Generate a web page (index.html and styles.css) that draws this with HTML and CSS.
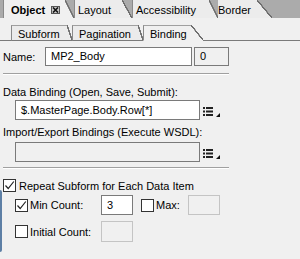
FILE: index.html
```html
<!DOCTYPE html>
<html>
<head>
  <link rel="stylesheet" href="styles.css">
</head>
<body>
  <!-- main palette tabs -->
  <div class="tabs-top">
    <div class="tab tab-on">
      <span class="tab-label tab-object">Object
        <span class="close-box">
          <svg width="7" height="6" viewBox="0 0 7 6"><path d="M1 0.5 L6 5.5 M6 0.5 L1 5.5" stroke="#111" stroke-width="1.6"/></svg>
        </span>
      </span>
      <span class="tab-slant"></span>
    </div>
    <div class="tab"><span class="tab-label tab-layout">Layout</span><span class="tab-slant tab-slant-10"></span></div>
    <div class="tab"><span class="tab-label tab-access">Accessibility</span><span class="tab-slant"></span></div>
    <div class="tab"><span class="tab-label tab-border">Border</span><span class="tab-slant tab-slant-wide"></span></div>
  </div>

  <!-- object sub tabs -->
  <div class="tabs-sub">
    <div class="subtab"><span class="subtab-label sub-subform">Subform</span><span class="subtab-slant"></span></div>
    <div class="subtab"><span class="subtab-label sub-pagination">Pagination</span><span class="subtab-slant"></span></div>
    <div class="subtab subtab-on"><span class="subtab-label sub-binding">Binding</span><span class="subtab-slant"></span></div>
    <div class="subtab-fill"></div>
  </div>

  <div class="panel">
    <div class="row-name">
      <span class="name-label">Name:</span>
      <div class="field field-name">MP2_Body</div>
      <div class="field field-off field-index">0</div>
    </div>

    <div class="sep"></div>

    <div class="caption">Data Binding (Open, Save, Submit):</div>
    <div class="row-bind">
      <div class="field field-bind">$.MasterPage.Body.Row[*]</div>
      <svg class="list-icon" width="18" height="12" viewBox="0 0 18 12">
        <rect x="0" y="1" width="2" height="2" fill="#222"/>
        <rect x="3" y="1" width="7" height="2" fill="#222"/>
        <rect x="0" y="4.5" width="2" height="2" fill="#222"/>
        <rect x="3" y="4.5" width="7" height="2" fill="#222"/>
        <rect x="0" y="8" width="2" height="2" fill="#222"/>
        <rect x="3" y="8" width="7" height="2" fill="#222"/>
        <path d="M13 11 L17 11 L17 7 Z" fill="#111"/>
      </svg>
    </div>

    <div class="caption caption-import">Import/Export Bindings (Execute WSDL):</div>
    <div class="row-bind">
      <div class="field field-bind field-off"></div>
      <svg class="list-icon" width="18" height="12" viewBox="0 0 18 12">
        <rect x="0" y="1" width="2" height="2" fill="#222"/>
        <rect x="3" y="1" width="7" height="2" fill="#222"/>
        <rect x="0" y="4.5" width="2" height="2" fill="#222"/>
        <rect x="3" y="4.5" width="7" height="2" fill="#222"/>
        <rect x="0" y="8" width="2" height="2" fill="#222"/>
        <rect x="3" y="8" width="7" height="2" fill="#222"/>
        <path d="M13 11 L17 11 L17 7 Z" fill="#111"/>
      </svg>
    </div>

    <div class="sep sep-lower"></div>

    <div class="check-row">
      <span class="check">
        <svg width="11" height="11" viewBox="0 0 11 11"><path d="M1.5 5.5 L4.2 8.5 L9.8 1.5" fill="none" stroke="#222" stroke-width="1.2"/></svg>
      </span>
      <span class="check-text">Repeat Subform for Each Data Item</span>
    </div>

    <div class="count-row">
      <span class="check">
        <svg width="11" height="11" viewBox="0 0 11 11"><path d="M1.5 5.5 L4.2 8.5 L9.8 1.5" fill="none" stroke="#222" stroke-width="1.2"/></svg>
      </span>
      <span class="count-label">Min Count:</span>
      <div class="field field-count">3</div>
      <span class="check check-max"></span>
      <span class="count-label count-label-max">Max:</span>
      <div class="field field-count field-off field-dim"></div>
    </div>

    <div class="count-row count-row-initial">
      <span class="check"></span>
      <span class="count-label">Initial Count:</span>
      <div class="field field-count field-off field-dim field-tall"></div>
    </div>
  </div>

  <!-- edge of the neighbouring palette -->
  <div class="edge-bar"></div>
</body>
</html>
```

FILE: styles.css
```css
body {
  margin: 0;
  width: 300px;
  height: 259px;
  overflow: hidden;
  position: relative;
  background: #f0f0f0;
  font-family: "Liberation Sans", Tahoma, sans-serif;
  font-size: 11px;
  color: #000;
}

/* top tab strip */
.tabs-top {
  display: flex;
  height: 18px;
  background: #ababab;
  padding-left: 3px;
}

.tab {
  display: flex;
  height: 18px;
}

.tab-label {
  box-sizing: border-box;
  display: flex;
  align-items: center;
  padding: 2px 0 0 3px;
  background: #ececec;
  border-left: 1px solid #8a8a8a;
  white-space: nowrap;
}

.tab-on .tab-label {
  background: #f0f0f0;
}

.tab-object {
  width: 62px;
  font-weight: bold;
  padding-left: 7px;
}

.tab-layout {
  width: 48px;
}

.tab-access {
  width: 77px;
}

.tab-border {
  width: 39px;
  padding-left: 0;
  border-left: 0;
}

.close-box {
  display: inline-flex;
  align-items: center;
  justify-content: center;
  width: 7px;
  height: 6px;
  margin-left: 6px;
  margin-top: -1px;
  border: 1px solid #555;
  background: #c8c8c8;
}

.tab-slant {
  width: 9px;
  background: linear-gradient(to top right, #ececec calc(50% - 0.8px), #6e6e6e calc(50% - 0.6px), #6e6e6e calc(50% + 0.6px), #ababab calc(50% + 0.8px));
}

.tab-on .tab-slant {
  background: linear-gradient(to top right, #f0f0f0 calc(50% - 0.8px), #6e6e6e calc(50% - 0.6px), #6e6e6e calc(50% + 0.6px), #ababab calc(50% + 0.8px));
}

.tab-slant-10 {
  width: 10px;
}

.tab-slant-wide {
  width: 15px;
}

/* sub tabs */
.tabs-sub {
  display: flex;
  height: 16px;
  margin-top: 7px;
}

.tabs-sub::before {
  content: "";
  width: 11px;
  border-bottom: 1px solid #7a7a7a;
}

.subtab {
  display: flex;
}

.subtab-label {
  box-sizing: border-box;
  display: flex;
  align-items: center;
  padding: 1px 0 0 6px;
  border-top: 1px solid #a0a0a0;
  border-left: 1px solid #8a8a8a;
  border-bottom: 1px solid #7a7a7a;
  background: #ebebeb;
  white-space: nowrap;
}

.sub-subform {
  width: 56px;
}

.sub-pagination {
  width: 66px;
}

.sub-binding {
  width: 48px;
}

.subtab-slant {
  width: 5px;
  border-bottom: 1px solid #7a7a7a;
  background: linear-gradient(to top right, #ebebeb calc(50% - 0.8px), #6e6e6e calc(50% - 0.6px), #6e6e6e calc(50% + 0.6px), #f0f0f0 calc(50% + 0.8px));
}

.subtab-on .subtab-label {
  background: #f0f0f0;
  border-bottom-color: #f0f0f0;
}

.subtab-on .subtab-slant {
  width: 12px;
  border-bottom-color: #f0f0f0;
  background: linear-gradient(to top right, #f0f0f0 calc(50% - 0.8px), #6e6e6e calc(50% - 0.6px), #6e6e6e calc(50% + 0.6px), #f0f0f0 calc(50% + 0.8px));
}

.subtab-fill {
  flex: 1;
  border-bottom: 1px solid #7a7a7a;
}

/* form */
.panel {
  padding: 0 3px;
}

.field {
  box-sizing: border-box;
  height: 20px;
  border: 1px solid #7a7a7a;
  background: #fff;
  padding: 0 5px;
  line-height: 18px;
  white-space: nowrap;
  overflow: hidden;
}

.field-off {
  background: #f0f0f0;
}

.field-dim {
  border-color: #c4c4c4;
}

.row-name {
  display: flex;
  align-items: center;
  margin-top: 6px;
}

.name-label {
  width: 42px;
}

.field-name {
  width: 147px;
  height: 19px;
  line-height: 17px;
}

.field-index {
  width: 35px;
  height: 19px;
  line-height: 17px;
  margin-left: 2px;
}

.sep {
  width: 226px;
  height: 0;
  border-top: 1px solid #a0a0a0;
  border-bottom: 1px solid #fff;
  margin-top: 7px;
}

.caption {
  margin-top: 11px;
  line-height: 13px;
}

.caption-import {
  margin-top: 6px;
}

.row-bind {
  display: flex;
  align-items: center;
  padding-left: 12px;
}

.caption + .row-bind {
  margin-top: 1px;
}

.caption-import + .row-bind {
  margin-top: 3px;
}

.field-bind {
  width: 185px;
}

.list-icon {
  margin-left: 3px;
  margin-top: 3px;
}

.sep-lower {
  margin-top: 5px;
}

/* checkboxes */
.check {
  box-sizing: border-box;
  display: inline-flex;
  align-items: center;
  justify-content: center;
  width: 13px;
  height: 13px;
  border: 1px solid #333;
  background: #fff;
  flex: none;
}

.check-row {
  display: flex;
  align-items: center;
  margin-top: 10px;
}

.check-text {
  margin-left: 3px;
}

.count-row {
  display: flex;
  align-items: center;
  margin-top: 3px;
  padding-left: 12px;
}

.count-row-initial {
  margin-top: 6px;
}

.count-label {
  width: 71px;
  margin-left: 2px;
}

.count-label-max {
  width: 32px;
}

.field-count {
  width: 32px;
}

.field-tall {
  height: 21px;
}

.check-max {
  margin-left: 8px;
}

.edge-bar {
  position: absolute;
  left: 0;
  top: 190px;
  width: 2px;
  height: 62px;
  background: #5d7fa5;
  border-radius: 0 2px 2px 0;
}
```
